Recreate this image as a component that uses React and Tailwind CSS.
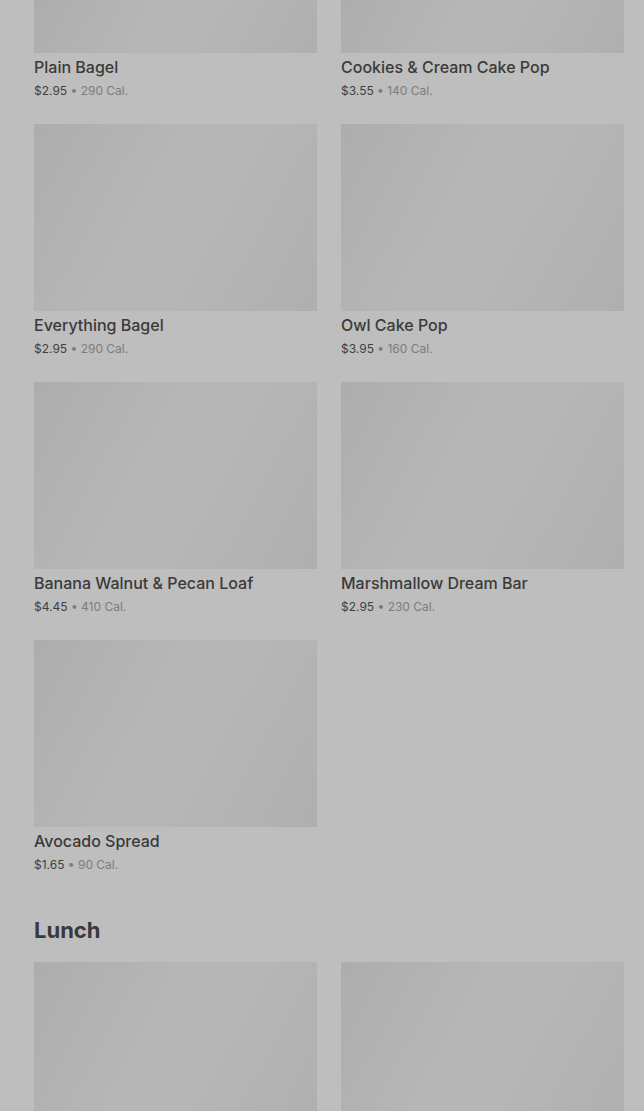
import React from 'react';

const rows = [
  [
    { name: 'Plain Bagel', price: '$2.95', cal: '290 Cal.' },
    { name: 'Cookies & Cream Cake Pop', price: '$3.55', cal: '140 Cal.' },
  ],
  [
    { name: 'Everything Bagel', price: '$2.95', cal: '290 Cal.' },
    { name: 'Owl Cake Pop', price: '$3.95', cal: '160 Cal.' },
  ],
  [
    { name: 'Banana Walnut & Pecan Loaf', price: '$4.45', cal: '410 Cal.' },
    { name: 'Marshmallow Dream Bar', price: '$2.95', cal: '230 Cal.' },
  ],
  [{ name: 'Avocado Spread', price: '$1.65', cal: '90 Cal.' }],
];

const ItemCard = ({ item, cropped }) => (
  <div className="flex flex-col">
    <div
      className={`${cropped ? 'h-[53px]' : 'h-[187px]'} w-full bg-[linear-gradient(118deg,#adadad_0%,#b6b6b6_40%,#b6b6b6_60%,#afafaf_100%)]`}
    />
    {item && (
      <>
        <div className="mt-[4px] text-[16px] leading-[20px] font-medium text-[#3a3a3a]">{item.name}</div>
        <div className="mt-[5px] text-[12px] leading-[18px] text-[#7c7c7c]">
          <span className="text-[#404040]">{item.price}</span> • {item.cal}
        </div>
      </>
    )}
  </div>
);

export default function App() {
  return (
    <div
      className="min-h-screen bg-[#bebebe] pl-[34px] pr-[20px]"
      style={{ fontFamily: 'Inter, "Noto Sans", sans-serif' }}
    >
      {/* Bakery items (scrolled) */}
      <div className="grid grid-cols-2 gap-x-[24px] gap-y-[24px]">
        {rows.map((row, ri) =>
          row.map((item, ci) => <ItemCard key={`${ri}-${ci}`} item={item} cropped={ri === 0} />)
        )}
      </div>

      {/* Lunch */}
      <h2 className="mt-[42px] text-[22px] leading-[28px] font-bold text-[#3a3a3a]">Lunch</h2>
      <div className="mt-[18px] grid grid-cols-2 gap-x-[24px] overflow-hidden h-[149px]">
        <ItemCard />
        <ItemCard />
      </div>
    </div>
  );
}
